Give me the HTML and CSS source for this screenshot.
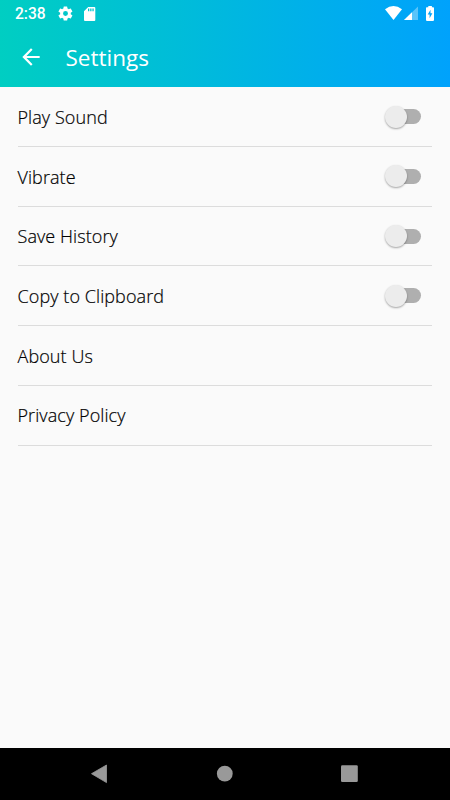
FILE: index.html
```html
<!DOCTYPE html>
<html lang="en">
<head>
<meta charset="utf-8">
<title>Settings</title>
<link rel="stylesheet" href="styles.css">
</head>
<body>
<header class="header">
  <div class="status">
    <span class="time">2:38</span>
    <svg class="gear" width="17" height="17" viewBox="0 0 24 24"><path d="M19.4 13a7.500 7.500 0 0 0 0-2l2.100-1.600a.5.500 0 0 0 .1-.6l-2-3.500a.5.500 0 0 0-.6-.2l-2.500 1a7.300 7.300 0 0 0-1.700-1l-.4-2.700a.5.500 0 0 0-.5-.4h-4a.5.500 0 0 0-.5.400L9 5.100a7.700 7.700 0 0 0-1.700 1l-2.500-1a.5.500 0 0 0-.6.200l-2 3.500a.5.500 0 0 0 .1.600L4.500 11a8 8 0 0 0 0 2l-2.200 1.600a.5.500 0 0 0-.1.600l2 3.500c.1.200.4.300.6.200l2.500-1a7.300 7.300 0 0 0 1.700 1l.4 2.700c0 .2.200.4.500.4h4c.3 0 .5-.2.500-.4l.4-2.700a7.700 7.700 0 0 0 1.700-1l2.500 1c.2.100.5 0 .6-.2l2-3.500a.5.500 0 0 0-.1-.6zM12 15.500a3.500 3.500 0 1 1 0-7 3.500 3.500 0 0 1 0 7z"/></svg>
    <svg class="card" width="12" height="14" viewBox="0 0 12 14"><path fill-rule="evenodd" d="M4.200 0H10.300q1 0 1 1v12q0 1-1 1H1q-1 0-1-1V4.200zM4 1.500v2.700h1.300V1.500zm2.200 0v2.700h1.300V1.500zm2.200 0v2.700h1.300V1.500z"/></svg>
    <svg class="signals" width="50" height="17" viewBox="0 0 50 17"><path d="M0 4.300Q8.500-2.200 17 4.300L8.500 15z"/><path opacity=".35" d="M19 15 33 1.500V15z"/><path d="M19 15 27 7.300V15z"/><path fill-rule="evenodd" d="M43.300 2.300V1h3.600v1.300h1.300q.8 0 .8.800v12q0 .8-.8.800h-6.400q-.8 0-.8-.8v-12q0-.8.800-.8zM45.500 4.800l-2.800 4.700h1.900v3.700l2.800-4.900h-1.900z"/></svg>
  </div>
  <div class="toolbar">
    <svg class="back" width="26" height="26" viewBox="0 0 24 24"><path d="M20 11H7.830l5.590-5.590L12 4l-8 8 8 8 1.410-1.410L7.830 13H20z"/></svg>
    <h1 class="title">Settings</h1>
  </div>
</header>
<main class="list">
  <label class="row"><span>Play Sound</span><i class="switch"></i></label>
  <label class="row"><span>Vibrate</span><i class="switch"></i></label>
  <label class="row"><span>Save History</span><i class="switch"></i></label>
  <label class="row"><span>Copy to Clipboard</span><i class="switch"></i></label>
  <div class="row"><span>About Us</span></div>
  <div class="row"><span>Privacy Policy</span></div>
</main>
<nav class="nav">
  <svg width="270" height="20" viewBox="0 0 270 20"><path d="M1.500 9.700 16.500 1v17.600z" stroke="#999" stroke-width=".8" stroke-linejoin="round"/><circle cx="134.800" cy="9.700" r="7.900"/><rect x="251" y="1.300" width="16.800" height="16.800" rx="1.300"/></svg>
</nav>
</body>
</html>
```
FILE: styles.css
```css
* { box-sizing: border-box; }
body {
  margin: 0;
  height: 800px;
  display: flex;
  flex-direction: column;
  background: #fafafa;
  color: #000;
  font-family: "Open Sans", sans-serif;
  overflow: hidden;
}
svg { display: block; fill: #fff; flex: none; }
.header {
  height: 87px;
  background: linear-gradient(90deg, #00cec2, #00a2fc);
  color: #fff;
}
.status {
  height: 27px;
  display: flex;
  align-items: center;
  padding: 0 15px;
}
.time { width: 42px; padding-top: 2px; font: 500 15.600px/27px Roboto, sans-serif; }
.card { margin-left: 10px; }
.signals { margin-left: auto; }
.toolbar { height: 60px; display: flex; align-items: center; padding-left: 18px; }
.back { margin-bottom: 1px; }
.title { margin: 0 0 0 21.500px; padding-top: 1px; font-size: 22.500px; font-weight: 400; line-height: 30px; }
.list { flex: 1; padding: .4px 18px 0; }
.row {
  height: 59.700px;
  display: flex;
  align-items: center;
  justify-content: space-between;
  border-bottom: 1px solid #dcdcdc;
  font-size: 18px;
  font-weight: 300;
  letter-spacing: .08px;
}
.row span { margin-left: -.5px; padding-top: .5px; -webkit-text-stroke: .2px #000; }
.switch {
  width: 33px;
  height: 15px;
  margin-right: 11px;
  display: flex;
  align-items: center;
  border-radius: 8px;
  background: #afafaf;
}
.switch::before {
  content: "";
  flex: none;
  width: 22px;
  height: 22px;
  margin-left: -3.500px;
  border-radius: 50%;
  background: #ececec;
  box-shadow: 0 1px 2px rgba(0, 0, 0, .35);
}
.nav {
  height: 52px;
  display: flex;
  align-items: center;
  justify-content: center;
  background: #000;
}
.nav svg { fill: #999; }
```
